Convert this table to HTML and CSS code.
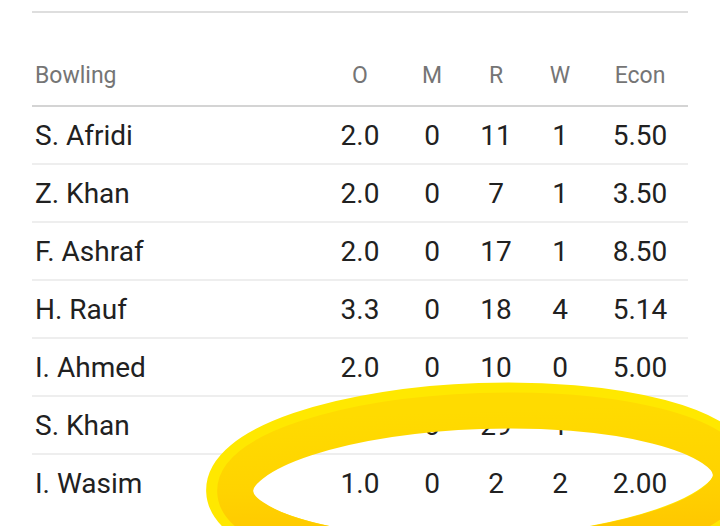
FILE: index.html
```html
<!DOCTYPE html>
<html>
<head>
<meta charset="utf-8">
<link rel="stylesheet" href="styles.css">
</head>
<body>
<div class="card">
  <div class="table">
    <div class="row head">
      <div class="cell name">Bowling</div>
      <div class="cell">O</div>
      <div class="cell">M</div>
      <div class="cell">R</div>
      <div class="cell">W</div>
      <div class="cell">Econ</div>
    </div>
    <div class="row">
      <div class="cell name">S. Afridi</div>
      <div class="cell">2.0</div><div class="cell">0</div><div class="cell">11</div><div class="cell">1</div><div class="cell">5.50</div>
    </div>
    <div class="row">
      <div class="cell name">Z. Khan</div>
      <div class="cell">2.0</div><div class="cell">0</div><div class="cell">7</div><div class="cell">1</div><div class="cell">3.50</div>
    </div>
    <div class="row">
      <div class="cell name">F. Ashraf</div>
      <div class="cell">2.0</div><div class="cell">0</div><div class="cell">17</div><div class="cell">1</div><div class="cell">8.50</div>
    </div>
    <div class="row">
      <div class="cell name">H. Rauf</div>
      <div class="cell">3.3</div><div class="cell">0</div><div class="cell">18</div><div class="cell">4</div><div class="cell">5.14</div>
    </div>
    <div class="row">
      <div class="cell name">I. Ahmed</div>
      <div class="cell">2.0</div><div class="cell">0</div><div class="cell">10</div><div class="cell">0</div><div class="cell">5.00</div>
    </div>
    <div class="row">
      <div class="cell name">S. Khan</div>
      <div class="cell">3.0</div><div class="cell">0</div><div class="cell">29</div><div class="cell">1</div><div class="cell">9.67</div>
    </div>
    <div class="row last">
      <div class="cell name">I. Wasim</div>
      <div class="cell">1.0</div><div class="cell">0</div><div class="cell">2</div><div class="cell">2</div><div class="cell">2.00</div>
    </div>
  </div>
</div>
<svg class="mark" width="720" height="526" viewBox="0 0 720 526" xmlns="http://www.w3.org/2000/svg">
  <defs>
    <linearGradient id="g" x1="0" y1="0" x2="0" y2="1">
      <stop offset="0" stop-color="#FFDB00"/>
      <stop offset="0.5" stop-color="#FFD300"/>
      <stop offset="1" stop-color="#FFC300"/>
    </linearGradient>
  </defs>
  <g transform="rotate(-2 482 482)">
    <ellipse cx="482" cy="482" rx="254" ry="77" fill="none" stroke="#FFE800" stroke-width="44"/>
    <ellipse cx="483" cy="483" rx="248" ry="72" fill="none" stroke="url(#g)" stroke-width="36"/>
  </g>
</svg>
</body>
</html>
```
FILE: styles.css
```css
html, body {
  margin: 0;
  padding: 0;
  background: #ffffff;
}
body {
  width: 720px;
  height: 526px;
  overflow: hidden;
  position: relative;
  font-family: Roboto, "Liberation Sans", sans-serif;
}
.card {
  padding: 11px 32px 0;
}
.table {
  border-top: 2px solid #dedede;
}
.row {
  display: grid;
  grid-template-columns: 1fr 80px 64px 64px 64px 96px;
  grid-template-rows: 56px;
  height: 56px;
  line-height: 58px;
  font-size: 28px;
  color: #212121;
  border-bottom: 2px solid #eeeeee;
}
.row.last {
  border-bottom: none;
}
.row.head {
  height: auto;
  grid-template-rows: 30px;
  padding: 48px 0 14px;
  line-height: 30px;
  font-size: 23px;
  color: #757575;
  border-bottom: 2px solid #d4d4d4;
}
.cell {
  text-align: center;
  white-space: nowrap;
}
.cell.name {
  text-align: left;
  padding-left: 3px;
}
.mark {
  position: absolute;
  left: 0;
  top: 0;
  pointer-events: none;
}
```
